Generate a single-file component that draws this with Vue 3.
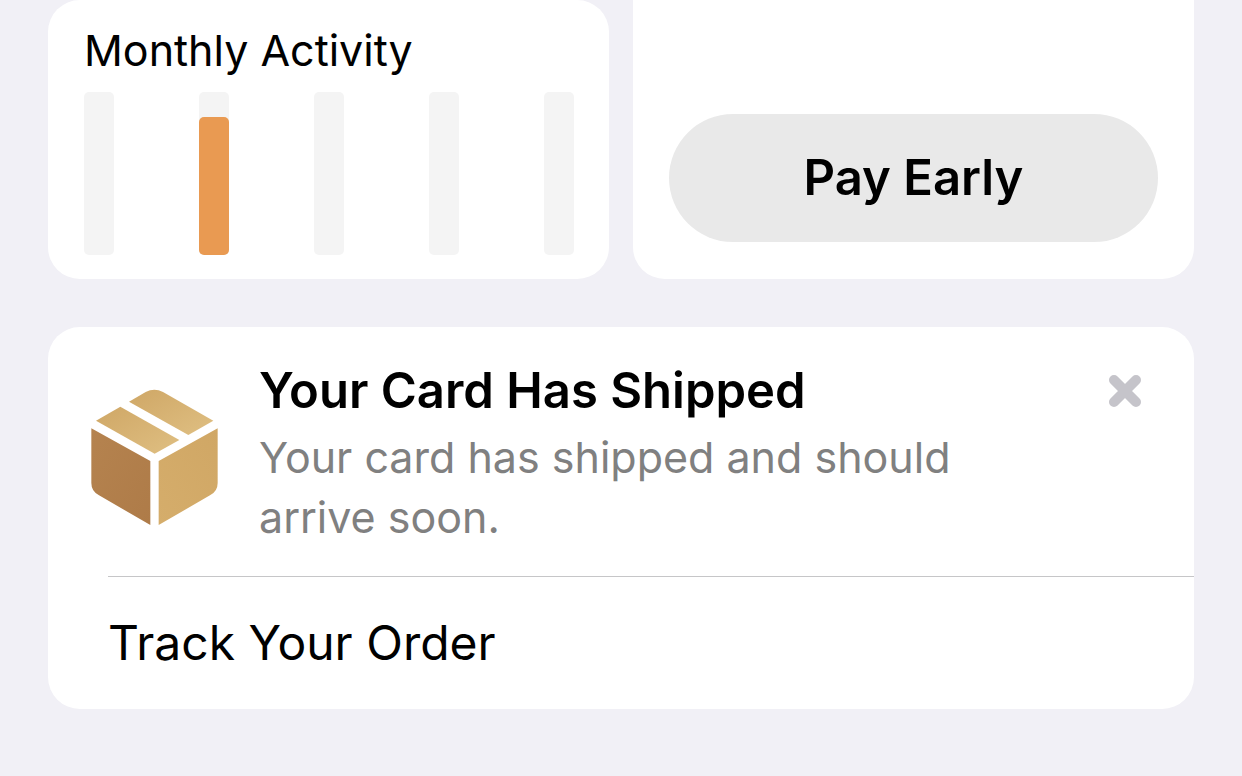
<script setup>
import { ref } from 'vue'

const months = ref([0, 84.5, 0, 0, 0])
const showNotice = ref(true)
</script>

<template>
  <main class="page">
    <div class="tiles">
      <section class="card activity" aria-labelledby="activity-title">
        <h2 id="activity-title">Monthly Activity</h2>
        <div class="bars">
          <div v-for="(value, i) in months" :key="i" class="bar">
            <div v-if="value" class="fill" :style="{ height: value + '%' }"></div>
          </div>
        </div>
      </section>
      <section class="card payment">
        <button type="button" class="pay">Pay Early</button>
      </section>
    </div>

    <section v-if="showNotice" class="card notice">
      <div class="message">
        <svg class="box" viewBox="33 27 381 411" aria-hidden="true">
          <defs>
            <linearGradient id="box-left" x1="0" y1="0" x2="1" y2="1">
              <stop offset="0" stop-color="#b5834f" />
              <stop offset="1" stop-color="#ae7b48" />
            </linearGradient>
            <linearGradient id="box-right" x1="0" y1="1" x2="1" y2="0">
              <stop offset="0" stop-color="#d5ad6b" />
              <stop offset="1" stop-color="#d0a765" />
            </linearGradient>
            <linearGradient id="box-top" x1="0" y1="0" x2="1" y2="1">
              <stop offset="0" stop-color="#cfa766" />
              <stop offset="1" stop-color="#dfbf82" />
            </linearGradient>
          </defs>
          <path fill="url(#box-top)" d="M147 65L197 36Q223 23 249 36L400 122L325 165Z" />
          <path fill="url(#box-top)" d="M48 122L121 80L298 180L224 221Z" />
          <path fill="url(#box-left)" d="M34 145L211 243V435L57 346Q34 334 34 309Z" />
          <path fill="url(#box-right)" d="M413 145L236 243V435L390 346Q413 334 413 309Z" />
        </svg>
        <div class="copy">
          <h2>Your Card Has Shipped</h2>
          <p>Your card has shipped and should arrive soon.</p>
        </div>
        <button type="button" class="close" aria-label="Dismiss" @click="showNotice = false">
          <svg viewBox="0 0 34 34" aria-hidden="true">
            <path d="M6 6L28 28M28 6L6 28" />
          </svg>
        </button>
      </div>
      <a class="track" href="#track">Track Your Order</a>
    </section>
  </main>
</template>

<style>
body {
  margin: 0;
  background: #f1f0f6;
}
</style>

<style scoped>
.page {
  box-sizing: border-box;
  min-height: 100vh;
  padding: 0 48px 48px;
  background: #f1f0f6;
  color: #000;
  font-family: Inter, "Liberation Sans", sans-serif;
}
h2,
p {
  margin: 0;
}
.tiles {
  display: grid;
  grid-template-columns: 1fr 1fr;
  gap: 24px;
  margin-bottom: 48px;
}
.card {
  border-radius: 32px;
  background: #fff;
}
.activity {
  padding: 20px 35px 24px 36px;
}
.activity h2 {
  margin-bottom: 12px;
  font-size: 43px;
  line-height: 60px;
  font-weight: 400;
}
.bars {
  display: flex;
  justify-content: space-between;
  height: 163px;
}
.bar {
  display: flex;
  align-items: flex-end;
  width: 30px;
  border-radius: 5px;
  background: #f4f4f4;
}
.fill {
  width: 100%;
  border-radius: 5px;
  background: #e99a52;
}
.payment {
  display: flex;
  align-items: flex-end;
  padding: 36px 36px 37px;
  border-radius: 0 0 32px 32px;
}
.pay {
  width: 100%;
  height: 128px;
  padding: 0;
  border: 0;
  border-radius: 64px;
  background: #e9e9e9;
  color: #000;
  font: 600 49px/60px Inter, "Liberation Sans", sans-serif;
}
.message {
  display: flex;
  align-items: flex-start;
  padding: 32px 52px 29px 43px;
}
.box {
  flex: none;
  width: 127px;
  height: 137px;
  margin: 30px 41px 0 0;
}
.copy {
  flex: 1;
  max-width: 740px;
}
.copy h2 {
  margin-bottom: 4px;
  font-size: 49px;
  line-height: 64px;
  font-weight: 600;
}
.copy p {
  color: #808080;
  font-size: 43px;
  line-height: 60px;
}
.close {
  flex: none;
  width: 34px;
  height: 34px;
  margin: 15px 0 0 auto;
  padding: 0;
  border: 0;
  background: none;
}
.close svg {
  display: block;
}
.close path {
  fill: none;
  stroke: #c5c4ca;
  stroke-width: 10;
  stroke-linecap: round;
}
.track {
  display: block;
  margin-left: 60px;
  padding: 34px 0;
  border-top: 1px solid #c6c6c8;
  color: #000;
  font-size: 48px;
  line-height: 64px;
  text-decoration: none;
}
</style>
